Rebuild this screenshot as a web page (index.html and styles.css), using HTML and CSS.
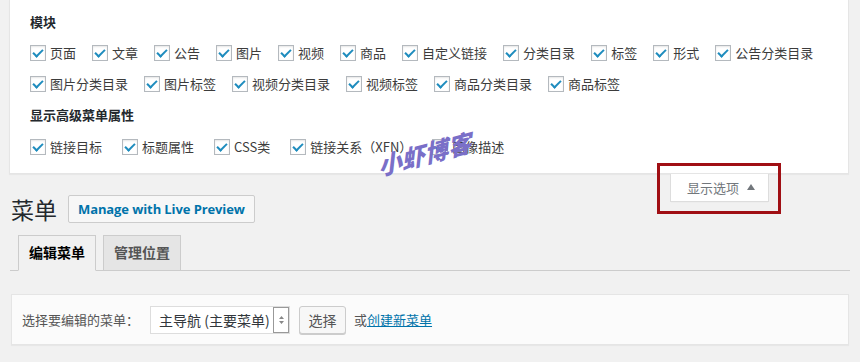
FILE: index.html
```html
<!DOCTYPE html>
<html lang="zh-CN">
<head>
<meta charset="utf-8">
<title>菜单</title>
<link rel="stylesheet" href="styles.css">
</head>
<body>
<div class="wrap">
  <div class="screen-meta">
    <h5 class="prefs-title">模块</h5>
    <div class="prefs-row">
      <label class="pref"><span class="cb"></span>页面</label>
      <label class="pref"><span class="cb"></span>文章</label>
      <label class="pref"><span class="cb"></span>公告</label>
      <label class="pref"><span class="cb"></span>图片</label>
      <label class="pref"><span class="cb"></span>视频</label>
      <label class="pref"><span class="cb"></span>商品</label>
      <label class="pref"><span class="cb"></span>自定义链接</label>
      <label class="pref"><span class="cb"></span>分类目录</label>
      <label class="pref"><span class="cb"></span>标签</label>
      <label class="pref"><span class="cb"></span>形式</label>
      <label class="pref"><span class="cb"></span>公告分类目录</label>
    </div>
    <div class="prefs-row">
      <label class="pref"><span class="cb"></span>图片分类目录</label>
      <label class="pref"><span class="cb"></span>图片标签</label>
      <label class="pref"><span class="cb"></span>视频分类目录</label>
      <label class="pref"><span class="cb"></span>视频标签</label>
      <label class="pref"><span class="cb"></span>商品分类目录</label>
      <label class="pref"><span class="cb"></span>商品标签</label>
    </div>
    <h5 class="prefs-title second">显示高级菜单属性</h5>
    <div class="prefs-row wide">
      <label class="pref"><span class="cb"></span>链接目标</label>
      <label class="pref"><span class="cb"></span>标题属性</label>
      <label class="pref"><span class="cb"></span>CSS类</label>
      <label class="pref"><span class="cb"></span>链接关系（XFN）</label>
      <label class="pref"><span class="cb"></span>图像描述</label>
    </div>
  </div>

  <div class="header-row">
    <div class="title-group">
      <h1 class="page-title">菜单</h1>
      <a class="live-btn" href="#">Manage with Live Preview</a>
    </div>
    <div class="meta-links">
      <button class="meta-toggle" type="button">显示选项 <span class="tri"></span></button>
    </div>
  </div>

  <div class="nav-tabs">
    <a class="nav-tab active" href="#">编辑菜单</a>
    <a class="nav-tab" href="#">管理位置</a>
  </div>

  <div class="manage-menus">
    <span class="sel-label">选择要编辑的菜单：</span>
    <span class="fake-select">主导航 (主要菜单)<span class="sel-arrow"><svg width="7" height="10" viewBox="0 0 7 10"><path d="M3.5 1 L6 4 H1 Z M3.5 9 L6 6 H1 Z" fill="#888"/></svg></span></span>
    <button class="btn" type="button">选择</button>
    <span class="or">或<a class="create-link" href="#">创建新菜单</a></span>
  </div>
</div>

<div class="highlight-box"></div>
<div class="watermark">小虾博客</div>
</body>
</html>
```

FILE: styles.css
```css
* { box-sizing: border-box; }

html, body {
  margin: 0;
  padding: 0;
}

body {
  background: #f1f1f1;
  font-family: "Noto Sans CJK SC", "Liberation Sans", sans-serif;
  font-size: 13px;
  color: #444;
  position: relative;
  width: 860px;
  height: 362px;
  overflow: hidden;
}

.wrap {
  margin: 0 10px 0 10px;
}

/* Screen options panel */
.screen-meta {
  background: #fff;
  border: 1px solid #e5e5e5;
  border-top: none;
  box-shadow: 0 1px 1px rgba(0,0,0,.04);
  margin-left: -1px;
  margin-right: 1px;
  padding: 12px 20px 12px 20px;
  height: 174px;
}

.prefs-title {
  margin: 0 0 5px 0;
  font-size: 13px;
  line-height: 20px;
  font-weight: 700;
  color: #23282d;
}

.prefs-title.second {
  margin-top: 6px;
  margin-bottom: 6px;
}

.prefs-row {
  display: flex;
  flex-wrap: nowrap;
  gap: 16px;
  height: 31px;
  align-items: center;
  white-space: nowrap;
}

.prefs-row.wide {
  gap: 20px;
}

.pref {
  display: flex;
  align-items: center;
  line-height: 20px;
  color: #3c3c3c;
}

.cb {
  position: relative;
  width: 16px;
  height: 16px;
  border: 1px solid #b4b9be;
  background: #fff;
  box-shadow: inset 0 1px 2px rgba(0,0,0,.1);
  margin-right: 4px;
  flex: none;
}

.cb::after {
  content: "";
  position: absolute;
  left: 4px;
  top: 1px;
  width: 4px;
  height: 8px;
  border-right: 2px solid #1e8cbe;
  border-bottom: 2px solid #1e8cbe;
  transform: rotate(45deg);
}

/* Header row */
.header-row {
  display: flex;
  justify-content: space-between;
  align-items: flex-start;
}

.title-group {
  display: flex;
  align-items: center;
  margin-top: 21px;
  margin-left: 1px;
}

.page-title {
  margin: 0 11px 0 0;
  font-size: 23px;
  font-weight: 400;
  line-height: 28px;
  color: #23282d;
}

.live-btn {
  display: inline-block;
  height: 28px;
  line-height: 26px;
  padding: 0 9px;
  border: 1px solid #ccc;
  border-radius: 2px;
  background: #f7f7f7;
  color: #0073aa;
  font-family: "Open Sans", "Liberation Sans", sans-serif;
  font-weight: 700;
  font-size: 13px;
  text-decoration: none;
  letter-spacing: -0.1px;
}

.meta-links {
  margin-right: 81px;
}

.meta-toggle {
  display: flex;
  align-items: center;
  height: 28px;
  width: 99px;
  padding: 0 0 0 16px;
  background: #fff;
  border: 1px solid #ddd;
  border-top: none;
  box-shadow: 0 1px 1px -1px rgba(0,0,0,.1);
  font-family: "Noto Sans CJK SC", sans-serif;
  font-size: 13px;
  line-height: 26px;
  color: #72777c;
}

.tri {
  display: inline-block;
  width: 0;
  height: 0;
  margin-left: 8px;
  margin-top: -2px;
  border-left: 4px solid transparent;
  border-right: 4px solid transparent;
  border-bottom: 6px solid #72777c;
}

/* Tabs */
.nav-tabs {
  display: flex;
  margin-top: 12px;
  padding-left: 8px;
  border-bottom: 1px solid #ccc;
  height: 36px;
}

.nav-tab {
  display: block;
  height: 35px;
  width: 78px;
  margin-right: 7px;
  border: 1px solid #ccc;
  border-bottom: none;
  background: #e5e5e5;
  color: #555;
  font-size: 14px;
  font-weight: 700;
  line-height: 33px;
  text-align: center;
  text-decoration: none;
}

.nav-tab.active {
  background: #f1f1f1;
  color: #000;
  height: 36px;
  margin-bottom: -1px;
  border-bottom: 1px solid #f1f1f1;
}

/* Manage menus box */
.manage-menus {
  display: flex;
  align-items: center;
  margin-top: 23px;
  margin-left: 1px;
  margin-right: 1px;
  height: 51px;
  padding: 0 10px;
  background: #fbfbfb;
  border: 1px solid #e5e5e5;
  box-shadow: 0 1px 1px rgba(0,0,0,.04);
}

.sel-label {
  color: #555;
  line-height: 20px;
  margin-right: 11px;
}

.fake-select {
  position: relative;
  display: flex;
  align-items: center;
  width: 140px;
  height: 28px;
  padding-left: 8px;
  background: #fff;
  border: 1px solid #ddd;
  color: #32373c;
  font-size: 14px;
  line-height: 20px;
}

.sel-arrow {
  position: absolute;
  right: 0;
  top: 0;
  width: 16px;
  height: 26px;
  border: 1px solid #999;
  background: #fff;
  display: flex;
  align-items: center;
  justify-content: center;
}

.btn {
  margin-left: 9px;
  height: 28px;
  width: 47px;
  padding: 0;
  background: #f7f7f7;
  border: 1px solid #ccc;
  border-radius: 3px;
  box-shadow: 0 1px 0 #ccc;
  color: #555;
  font-family: "Noto Sans CJK SC", sans-serif;
  font-size: 14px;
  line-height: 26px;
}

.or {
  margin-left: 8px;
  color: #555;
  line-height: 20px;
}

.create-link {
  color: #0073aa;
  text-decoration: underline;
}

/* Overlays */
.highlight-box {
  position: absolute;
  left: 657px;
  top: 163px;
  width: 124px;
  height: 51px;
  border: 3px solid #a00f14;
}

.watermark {
  position: absolute;
  left: 380px;
  top: 152px;
  font-size: 24px;
  font-weight: 900;
  font-style: italic;
  line-height: 28px;
  color: #7a6fc8;
  letter-spacing: 0px;
  transform: rotate(-15deg) skewX(-8deg);
  transform-origin: left bottom;
  white-space: nowrap;
}
```
